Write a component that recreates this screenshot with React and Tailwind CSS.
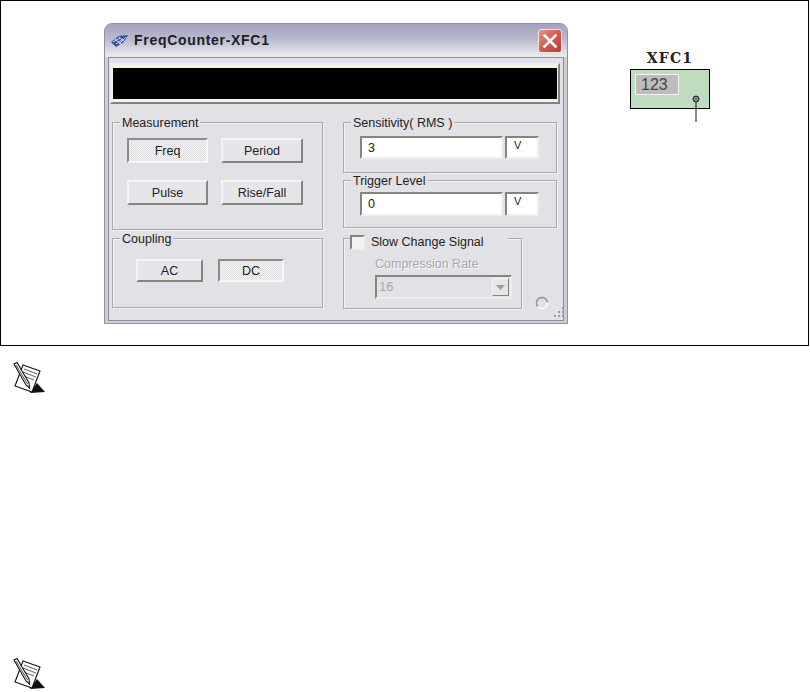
const dither = "bg-[repeating-conic-gradient(#dcdce0_0_25%,#f6f6f6_0_50%)] bg-[length:2px_2px]";

function Btn({ label, pressed, className = "" }) {
  return (
    <div
      className={
        `flex items-center justify-center pt-[1px] text-[12.5px] text-[#222] ${className} ` +
        (pressed
          ? `border-2 border-t-[#8d8d86] border-l-[#8d8d86] border-r-[#f6f6f6] border-b-[#f6f6f6] ${dither}`
          : "border-2 border-t-[#f4f4f4] border-l-[#f4f4f4] border-r-[#85857d] border-b-[#85857d] bg-[#e6e6ea]")
      }
    >
      {label}
    </div>
  );
}

function Group({ label, className = "", children }) {
  return (
    <div className={`relative border border-[#aaaaae] shadow-[inset_1px_1px_0_#f2f2f4,1px_1px_0_#f2f2f4] ${className}`}>
      <span className="absolute -top-[8px] left-[7px] bg-[#e1e1e6] px-[2px] text-[12.5px] leading-[16px] text-[#222]">{label}</span>
      {children}
    </div>
  );
}

function Field({ value, className = "" }) {
  const sunk = "border-2 border-t-[#85857d] border-l-[#85857d] border-r-[#efefef] border-b-[#efefef] bg-white";
  return (
    <div className={`ml-[16px] flex gap-[2px] ${className}`}>
      <div className={`w-[143px] ${sunk} pl-[6px] text-[12.5px] leading-[21px] text-[#222]`}>{value}</div>
      <div className={`w-[34px] ${sunk} pl-[7px] text-[11px] leading-[15px] text-[#222]`}>V</div>
    </div>
  );
}

function NoteIcon({ className = "" }) {
  return (
    <svg width="34" height="34" viewBox="0 0 34 34" className={className}>
      <path d="M24 21 L32 30 L17 31 Z" fill="#111" />
      <path d="M10 3 L27 9 L19 30 L2 24 Z" fill="#fff" stroke="#111" strokeWidth="1.1" />
      <path d="M11 7 L24 12 M10 10 L23 15 M13 15 L21 18" stroke="#333" strokeWidth="0.8" />
      <path d="M1 2 L4 0.5 L16 21 L16.5 26 L13 23 Z" fill="#fff" stroke="#111" strokeWidth="1.1" />
      <path d="M3 3 L14.5 22" stroke="#111" strokeWidth="0.7" />
    </svg>
  );
}

export default function App() {
  return (
    <div className="relative h-[692px] w-[810px] overflow-hidden bg-white font-['Liberation_Sans',sans-serif]">
      <div className="flex h-[346px] w-[809px] items-start border border-black">
        {/* window */}
        <div className="ml-[103px] mt-[22px] flex h-[301px] w-[464px] shrink-0 flex-col overflow-hidden rounded-t-[8px] border border-[#8f8fa6] bg-[#cfcfda]">
          <div className="flex h-[33px] shrink-0 items-center bg-[linear-gradient(#a3a3bd,#b9b9cc_45%,#ecedf2)] pl-[5px] pr-[5px]">
            <svg width="19" height="14" viewBox="0 0 19 14">
              <path d="M1 8 L9 2 L18 1 L14 8 L6 13 Z" fill="#3a4f9c" />
              <path d="M3 8 L10 4 M6 10 L13 5 M9 10 L16 3 M5 5 L12 11 M9 3 L15 8" stroke="#e3e7f6" strokeWidth="0.9" />
            </svg>
            <span className="ml-[5px] text-[14px] font-bold tracking-[0.7px] text-[#1d1d26]">FreqCounter-XFC1</span>
            <div className="ml-auto flex h-[24px] w-[24px] items-center justify-center rounded-[3px] border border-[#f1e6e6] bg-[linear-gradient(135deg,#e8968a,#d25a50_50%,#b93b38)]">
              <svg width="16" height="16" viewBox="0 0 16 16">
                <path d="M2.5 2.5 L13.5 13.5 M13.5 2.5 L2.5 13.5" stroke="#fff" strokeWidth="2.6" strokeLinecap="square" />
              </svg>
            </div>
          </div>
          <div className="mx-[3px] mb-[3px] flex flex-1 flex-col border border-[#8a8aa2] bg-[#e1e1e6]">
            {/* display */}
            <div className="ml-[1px] mr-[3px] mt-[5px] h-[41px] shrink-0 border-2 border-t-[#f1f0e2] border-l-[#f1f0e2] border-r-[#85857d] border-b-[#85857d] bg-[#f4f4ec] px-[1px] py-[3px]">
              <div className="h-full bg-black" />
            </div>
            <div className="mt-[18px] flex">
              {/* left */}
              <div className="ml-[3px] w-[211px] shrink-0">
                <Group label="Measurement" className="h-[108px]">
                  <div className="ml-[14px] mt-[15px] grid w-[177px] grid-cols-[81px_82px] gap-x-[13px] gap-y-[17px]">
                    <Btn label="Freq" pressed className="h-[25px]" />
                    <Btn label="Period" className="h-[25px]" />
                    <Btn label="Pulse" className="h-[25px]" />
                    <Btn label="Rise/Fall" className="h-[25px]" />
                  </div>
                </Group>
                <Group label="Coupling" className="mt-[8px] h-[70px]">
                  <div className="ml-[23px] mt-[20px] flex gap-[15px]">
                    <Btn label="AC" className="h-[23px] w-[67px]" />
                    <Btn label="DC" pressed className="h-[23px] w-[66px]" />
                  </div>
                </Group>
              </div>
              {/* right */}
              <div className="ml-[20px] w-[214px] shrink-0">
                <Group label="Sensitivity( RMS )" className="h-[51px]"><Field value="3" className="mt-[13px] h-[23px]" /></Group>
                <Group label="Trigger Level" className="mt-[7px] h-[48px]"><Field value="0" className="mt-[11px] h-[24px]" /></Group>
                <div className="flex items-start">
                  <div className="relative mt-[10px] h-[71px] w-[179px] shrink-0 border border-[#aaaaae] shadow-[inset_1px_1px_0_#f2f2f4,1px_1px_0_#f2f2f4]">
                    <div className="absolute -top-[5px] left-[6px] flex h-[16px] items-center bg-[#e1e1e6] pr-[24px]">
                      <div className="h-[15px] w-[15px] border-2 border-t-[#85857d] border-l-[#85857d] border-r-[#efefef] border-b-[#efefef] bg-[#f2f2f2]" />
                      <span className="ml-[6px] text-[12.5px] text-[#222]">Slow Change Signal</span>
                    </div>
                    <div className="ml-[31px] mt-[17px] text-[12.5px] leading-[16px] text-[#a8a8ac] [text-shadow:1px_1px_0_#fafafa]">Compression Rate</div>
                    <div className="ml-[31px] mt-[3px] flex h-[24px] w-[137px] items-center border-2 border-t-[#85857d] border-l-[#85857d] border-r-[#efefef] border-b-[#efefef] bg-[#e1e1e6] pl-[2px] pr-[1px] text-[13px] text-[#a8a8ac]">
                      16
                      <div className="ml-auto flex h-[18px] w-[17px] items-center justify-center border border-t-[#f4f4f4] border-l-[#f4f4f4] border-r-[#85857d] border-b-[#85857d] bg-[#e6e6ea]">
                        <svg width="9" height="5" viewBox="0 0 9 5"><path d="M0 0 H9 L4.5 5 Z" fill="#9a9a9e" /></svg>
                      </div>
                    </div>
                  </div>
                  <svg width="43" height="26" viewBox="0 0 43 26" className="mt-[66px] shrink-0">
                    <circle cx="20" cy="9" r="5.5" fill="none" stroke="#f8f8f8" strokeWidth="2" />
                    <circle cx="20" cy="9" r="5.5" fill="none" stroke="#9a9a9e" strokeWidth="1.8" strokeDasharray="20 14.5" transform="rotate(140 20 9)" />
                    <g fill="#9a9a9e">
                      <rect x="40" y="13" width="2" height="2" /><rect x="40" y="17" width="2" height="2" /><rect x="36" y="17" width="2" height="2" />
                      <rect x="40" y="21" width="2" height="2" /><rect x="36" y="21" width="2" height="2" /><rect x="32" y="21" width="2" height="2" />
                    </g>
                  </svg>
                </div>
              </div>
            </div>
          </div>
        </div>
        {/* instrument symbol */}
        <div className="ml-[62px] mt-[49px] flex w-[80px] shrink-0 flex-col">
          <div className="text-center font-['DejaVu_Serif',serif] text-[14px] font-bold leading-[16px] tracking-[1.2px] text-[#222]">XFC1</div>
          <div className="mt-[3px] flex h-[40px] w-[80px] items-start border border-black bg-[#bfdcbf] pl-[4px] pt-[4px]">
            <div className="h-[21px] w-[44px] border border-[#f4f4f4] bg-[#bdbdbd] pl-[5px] text-[16px] leading-[19px] text-[#444]">123</div>
          </div>
          <svg width="12" height="28" viewBox="0 0 12 28" className="-mt-[14px] ml-[60px] overflow-visible">
            <line x1="6" y1="4" x2="6" y2="27" stroke="#111" strokeWidth="1" />
            <circle cx="6" cy="4" r="3" fill="#77858a" stroke="#222" strokeWidth="1" />
          </svg>
        </div>
      </div>
      <NoteIcon className="ml-[13px] mt-[16px]" />
      <NoteIcon className="ml-[13px] mt-[262px]" />
    </div>
  );
}
